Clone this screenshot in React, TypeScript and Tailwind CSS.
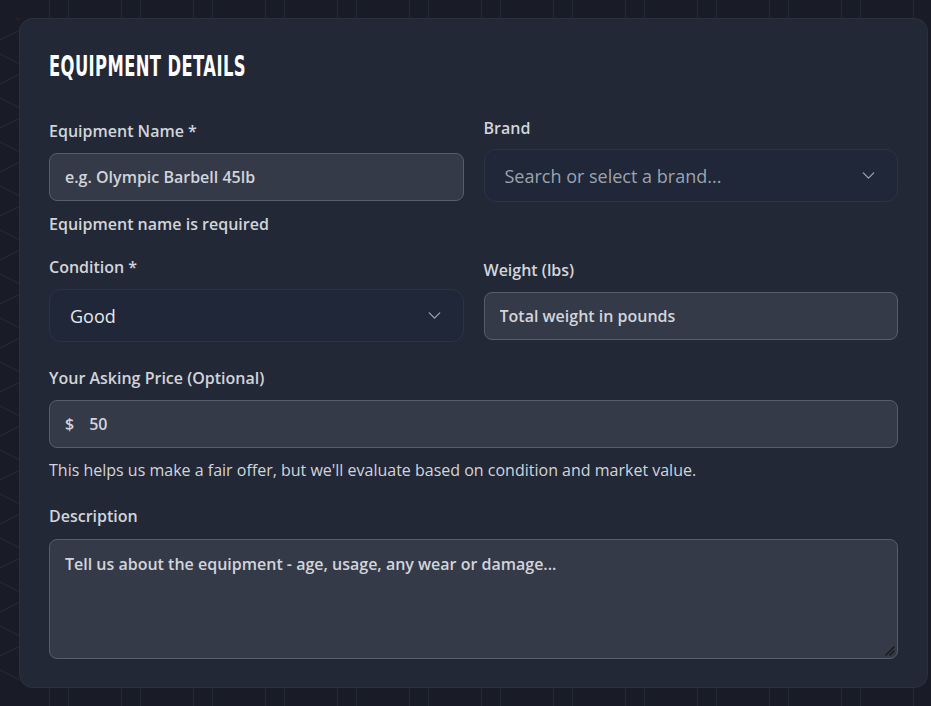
import { ChevronDown } from "lucide-react"

const body = { fontFamily: '"Open Sans", "Noto Sans", sans-serif' }

function Label({ children, className = "" }: { children: React.ReactNode; className?: string }) {
  return <label className={`block text-base leading-6 font-semibold text-[#d1d5db] ${className}`}>{children}</label>
}

function SelectBox({ value, placeholder }: { value?: string; placeholder?: string }) {
  return (
    <div className="flex h-[53px] items-center justify-between rounded-xl border border-[#2b3445] bg-[#1f2738] pl-5 pr-[18px]">
      {value ? (
        <span className="text-lg text-[#e5e7eb]">{value}</span>
      ) : (
        <span className="text-lg text-[#9ca3af]">{placeholder}</span>
      )}
      <ChevronDown size={21} strokeWidth={1.5} className="text-[#9ca3af]" />
    </div>
  )
}

const inputCls =
  "block h-12 w-full rounded-lg border border-[#575d6c] bg-[#353a48] px-[15px] text-base font-semibold text-[#d1d5db] outline-none placeholder:text-[#d1d5db]"

export default function App() {
  return (
    <div className="relative min-h-screen overflow-hidden bg-[#191c27] pl-[19px] pr-[3px] pt-[18px] pb-[18px]" style={body}>
      <svg className="pointer-events-none absolute inset-0 h-full w-full" aria-hidden>
        <defs>
          <pattern id="cols" width="72" height="706" patternUnits="userSpaceOnUse">
            <path d="M49.5 0v706M68.5 0v706" stroke="#242938" strokeWidth="1" fill="none" />
          </pattern>
          <pattern id="zig" width="30" height="44" patternUnits="userSpaceOnUse" y="8">
            <path d="M0 2L20 12M20 22L0 32" stroke="#252a39" strokeWidth="1" fill="none" />
          </pattern>
        </defs>
        <rect width="100%" height="100%" fill="url(#cols)" />
        <rect x="0" y="18" width="19" height="670" fill="#191c27" />
        <rect x="0" y="18" width="19" height="670" fill="url(#zig)" />
      </svg>

      <div className="relative w-[909px] rounded-[14px] border border-white/[0.04] bg-[#232836] px-[29px] pt-[29px] pb-[28px]">
        <h2
          className="origin-left scale-x-[0.564] text-[29px] leading-9 font-bold tracking-wide whitespace-nowrap text-white uppercase"
          style={{ fontFamily: '"DejaVu Sans", "Liberation Sans", sans-serif' }}
        >
          Equipment Details
        </h2>

        <div className="mt-8 grid grid-cols-2 items-start gap-x-5">
          <div className="pt-[3px]">
            <Label className="mb-[10px]">Equipment Name *</Label>
            <input className={inputCls} placeholder="e.g. Olympic Barbell 45lb" />
            <p className="mt-[11px] text-base leading-6 font-semibold text-[#d1d5db]">Equipment name is required</p>
          </div>
          <div>
            <Label className="mb-[9px]">Brand</Label>
            <SelectBox placeholder="Search or select a brand..." />
          </div>
        </div>

        <div className="mt-[19px] grid grid-cols-2 items-start gap-x-5">
          <div>
            <Label className="mb-[10px]">Condition *</Label>
            <SelectBox value="Good" />
          </div>
          <div className="pt-[3px]">
            <Label className="mb-[10px]">Weight (lbs)</Label>
            <input className={inputCls} placeholder="Total weight in pounds" />
          </div>
        </div>

        <div className="mt-6">
          <Label className="mb-[10px]">Your Asking Price (Optional)</Label>
          <div className="flex h-12 items-center gap-[15px] rounded-lg border border-[#575d6c] bg-[#353a48] px-[15px]">
            <span className="text-base font-semibold text-[#d1d5db]">$</span>
            <input className="w-full bg-transparent text-base font-semibold text-[#d1d5db] outline-none" defaultValue="50" />
          </div>
          <p className="mt-[10px] text-base leading-6 text-[#d1d5db]">
            This helps us make a fair offer, but we'll evaluate based on condition and market value.
          </p>
        </div>

        <div className="mt-[22px]">
          <Label className="mb-[11px]">Description</Label>
          <div className="relative">
            <textarea
              className="block h-[120px] w-full resize-none rounded-lg border border-[#575d6c] bg-[#353a48] px-[15px] py-3 text-base leading-6 font-semibold text-[#d1d5db] outline-none placeholder:text-[#d1d5db]"
              placeholder="Tell us about the equipment - age, usage, any wear or damage..."
            />
            <svg className="pointer-events-none absolute right-[3px] bottom-[3px]" width="10" height="10" viewBox="0 0 10 10" aria-hidden>
              <path d="M1 9L9 1M5 9L9 5" stroke="#1a1a1a" strokeWidth="1.6" strokeLinecap="round" />
            </svg>
          </div>
        </div>
      </div>
    </div>
  )
}
